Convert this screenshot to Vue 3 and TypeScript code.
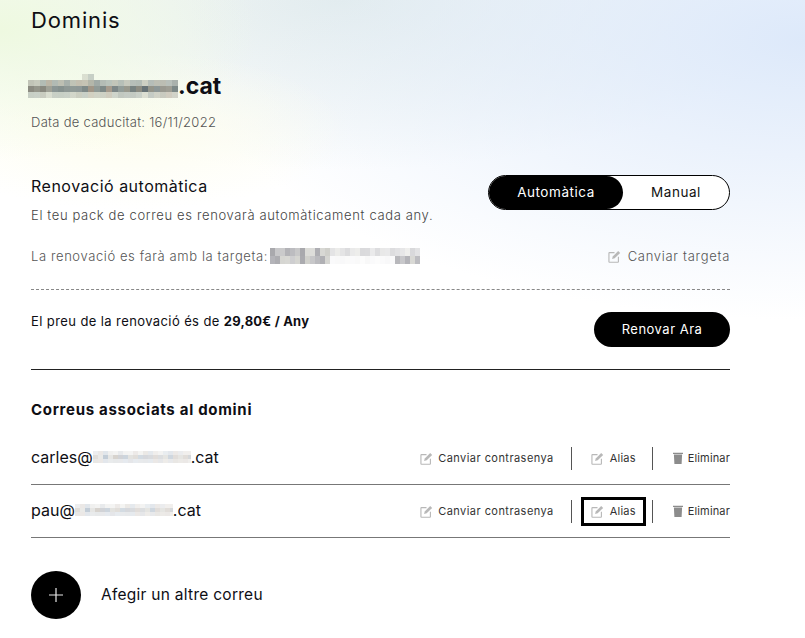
<template>
  <div class="page">
    <div class="page__bg"></div>
    <main class="content">
      <h1 class="title">Dominis</h1>

      <div class="domain">
        <span class="mosaic mosaic--domain">
          <i v-for="(c, i) in domainBlur" :key="i" :style="{ background: c }"></i>
        </span>
        <span>.cat</span>
      </div>
      <p class="expiry">Data de caducitat: 16/11/2022</p>

      <section class="renewal">
        <div class="renewal__text">
          <h2 class="renewal__title">Renovació automàtica</h2>
          <p class="renewal__desc">El teu pack de correu es renovarà automàticament cada any.</p>
        </div>
        <div class="switch">
          <button class="switch__opt switch__opt--active">Automàtica</button>
          <button class="switch__opt">Manual</button>
        </div>
      </section>

      <div class="card-row">
        <span class="card-row__label">La renovació es farà amb la targeta:</span>
        <span class="mosaic mosaic--card">
          <i v-for="(c, i) in cardBlur" :key="i" :style="{ background: c }"></i>
        </span>
        <a class="action action--big">
          <svg class="edit-icon" viewBox="0 0 14 14">
            <path d="M11.2 7.4V12.6a.6.6 0 0 1-.6.6H1.6a.6.6 0 0 1-.6-.6V3.4a.6.6 0 0 1 .6-.6H7" fill="none" stroke="#b8b8b8" stroke-width="1.2" />
            <path d="M4.4 9.8l.7-2.8L11 1l2.1 2.1-5.9 5.9z" fill="#b8b8b8" />
          </svg>
          Canviar targeta
        </a>
      </div>

      <div class="price-row">
        <p class="price-row__text">El preu de la renovació és de <b>29,80€ / Any</b></p>
        <button class="renew-btn">Renovar Ara</button>
      </div>

      <section class="mails">
        <h3 class="mails__title">Correus associats al domini</h3>
        <div v-for="m in mails" :key="m.user" class="mail">
          <div class="mail__addr">
            <span>{{ m.user }}@</span>
            <span class="mosaic mosaic--mail">
              <i v-for="(c, i) in mailBlur" :key="i" :style="{ background: c }"></i>
            </span>
            <span>.cat</span>
          </div>
          <div class="mail__actions">
            <a class="action action--pass">
              <svg class="edit-icon" viewBox="0 0 14 14">
                <path d="M11.2 7.4V12.6a.6.6 0 0 1-.6.6H1.6a.6.6 0 0 1-.6-.6V3.4a.6.6 0 0 1 .6-.6H7" fill="none" stroke="#b8b8b8" stroke-width="1.2" />
                <path d="M4.4 9.8l.7-2.8L11 1l2.1 2.1-5.9 5.9z" fill="#b8b8b8" />
              </svg>
              Canviar contrasenya
            </a>
            <span class="sep"></span>
            <a class="action action--alias" :class="{ 'action--focus': m.focus }">
              <svg class="edit-icon" viewBox="0 0 14 14">
                <path d="M11.2 7.4V12.6a.6.6 0 0 1-.6.6H1.6a.6.6 0 0 1-.6-.6V3.4a.6.6 0 0 1 .6-.6H7" fill="none" stroke="#b8b8b8" stroke-width="1.2" />
                <path d="M4.4 9.8l.7-2.8L11 1l2.1 2.1-5.9 5.9z" fill="#b8b8b8" />
              </svg>
              Alias
            </a>
            <span class="sep"></span>
            <a class="action action--del">
              <svg class="trash-icon" viewBox="0 0 10 12">
                <path d="M0 .8h10v1.2H0zM.9 2.6h8.2l-.5 9.4H1.4z" fill="#8c8c8c" />
              </svg>
              Eliminar
            </a>
          </div>
        </div>
      </section>

      <div class="add">
        <button class="add__btn" aria-label="Afegir">
          <svg viewBox="0 0 14 14" width="14" height="14">
            <path d="M7 0v14M0 7h14" stroke="#e8e8e8" stroke-width="1.2" />
          </svg>
        </button>
        <span class="add__label">Afegir un altre correu</span>
      </div>
    </main>
  </div>
</template>

<script setup lang="ts">
const mails = [
  { user: "carles", focus: false },
  { user: "pau", focus: true },
];

const noise = (n: number) => {
  const v = Math.sin(n * 12.9898) * 43758.5453;
  return v - Math.floor(v);
};

// shape gives the opacity of a pixel, then it picks a colour from the palette
const blur = (
  palette: string[],
  rows: number,
  cols: number,
  seed: number,
  shape: (r: number, c: number) => number,
) => {
  const out: string[] = [];
  for (let r = 0; r < rows; r++) {
    for (let c = 0; c < cols; c++) {
      const tone = palette[Math.floor(noise(seed + r * 31 + c) * palette.length)];
      const o = shape(r, c) * (0.7 + 0.3 * noise(seed + r * 17 + c * 3));
      out.push(`rgba(${tone}, ${o.toFixed(2)})`);
    }
  }
  return out;
};

const domainRows = [0, 0.6, 1, 0.4];
const domainBlur = blur(
  ["110,122,122", "130,130,120", "100,112,116", "140,125,110", "150,150,140"],
  4,
  25,
  5,
  (r, c) => (r === 0 && (c === 9 || c === 10) ? 0.35 : domainRows[r]),
);

const cardBlur = blur(
  ["170,170,175", "190,190,192", "150,150,155", "205,205,200"],
  2,
  30,
  3,
  (r, c) => {
    if (c < 12) return 0.95;
    if (r === 0) return 0.45;
    return c > 24 ? 0.9 : 0.08;
  },
);

const mailRows = [0.5, 1, 0.55];
const mailBlur = blur(
  ["205,208,212", "215,210,205", "195,205,215", "225,225,222"],
  3,
  20,
  7,
  (r) => mailRows[r],
);
</script>

<style scoped>
.page {
  position: relative;
  width: 805px;
  height: 638px;
  overflow: hidden;
  background: #fff;
  color: #0e0e14;
  font-family: Inter, "Liberation Sans", sans-serif;
}

.page__bg {
  position: absolute;
  left: 0;
  top: 0;
  width: 805px;
  height: 320px;
  background:
    radial-gradient(ellipse 260px 130px at 0 30px, #eef9e0 0%, rgba(238, 249, 224, 0) 100%),
    radial-gradient(ellipse 220px 80px at 130px 130px, rgba(253, 253, 236, 0.9) 0%, rgba(253, 253, 236, 0) 100%),
    radial-gradient(ellipse 620px 280px at 805px 40px, #dde9fa 0%, rgba(221, 233, 250, 0) 100%),
    radial-gradient(ellipse 460px 170px at 340px 0, #e4edec 0%, rgba(228, 237, 236, 0) 100%),
    #fff;
}

.content {
  position: relative;
  width: 699px;
  margin-left: 31px;
}

.title {
  margin: 0;
  padding-top: 5px;
  font-size: 22px;
  line-height: 30px;
  font-weight: 400;
  letter-spacing: 0.85px;
}

.domain {
  display: flex;
  align-items: center;
  margin-top: 35px;
  margin-left: -3px;
  height: 32px;
  font-size: 23px;
  font-weight: 700;
}

.mosaic {
  display: inline-grid;
  flex-shrink: 0;
}

.mosaic i {
  display: block;
}

.mosaic--domain {
  grid-template-columns: repeat(25, 6px);
  grid-auto-rows: 6px;
  width: 150px;
  height: 24px;
}

.mosaic--card {
  grid-template-columns: repeat(30, 5px);
  grid-auto-rows: 8px;
  margin-left: 2px;
  width: 150px;
  height: 16px;
}

.mosaic--mail {
  grid-template-columns: repeat(20, 5px);
  grid-auto-rows: 4px;
  width: 98px;
  height: 12px;
  overflow: hidden;
}

.expiry {
  margin: 10px 0 0;
  font-size: 13px;
  line-height: 20px;
  font-weight: 300;
  letter-spacing: 0.28px;
  color: #555;
}

.renewal {
  display: flex;
  justify-content: space-between;
  margin-top: 43px;
}

.renewal__title {
  margin: 0;
  font-size: 16px;
  line-height: 22px;
  font-weight: 400;
  letter-spacing: 0.5px;
}

.renewal__desc {
  margin: 9px 0 0;
  font-size: 13px;
  line-height: 18px;
  font-weight: 300;
  letter-spacing: 0.64px;
  color: #444;
}

.switch {
  display: flex;
  width: 242px;
  height: 35px;
  border: 1px solid #000;
  border-radius: 18px;
  background: #fff;
  box-sizing: border-box;
}

.switch__opt {
  flex: 1;
  border: 0;
  background: none;
  padding: 0 0 2px;
  font: inherit;
  font-size: 13.5px;
  letter-spacing: 0.55px;
  color: #111;
  border-radius: 17px;
}

.switch__opt--active {
  flex: 0 0 134px;
  background: #000;
  color: #fff;
}

.card-row {
  display: flex;
  align-items: center;
  margin-top: 21px;
  height: 22px;
  font-size: 13px;
  font-weight: 300;
  letter-spacing: 0.6px;
  color: #555;
}

.action {
  display: inline-flex;
  align-items: center;
  gap: 5px;
  font-size: 11px;
  letter-spacing: 0.4px;
  color: #333;
  font-weight: 400;
}

.action--big {
  margin-left: auto;
  gap: 7px;
  font-size: 13px;
  font-weight: 300;
  letter-spacing: 0.7px;
  color: #555;
}

.edit-icon {
  width: 13px;
  height: 13px;
}

.trash-icon {
  width: 10px;
  height: 12px;
}

.price-row {
  display: flex;
  justify-content: space-between;
  align-items: flex-start;
  margin-top: 22px;
  padding-top: 22px;
  padding-bottom: 22px;
  border-top: 1px dashed #888;
  border-bottom: 1px solid #222;
}

.price-row__text {
  margin: 0;
  font-size: 13px;
  line-height: 18px;
  letter-spacing: 0.4px;
}

.price-row__text b {
  font-weight: 700;
  letter-spacing: 0.2px;
}

.renew-btn {
  width: 136px;
  height: 35px;
  padding: 0 0 2px;
  border: 0;
  border-radius: 18px;
  background: #000;
  color: #fff;
  font: inherit;
  font-size: 13px;
  letter-spacing: 0.5px;
}

.mails__title {
  margin: 0;
  padding-top: 30px;
  font-size: 15px;
  line-height: 20px;
  font-weight: 700;
  letter-spacing: 0.7px;
}

.mail {
  display: flex;
  align-items: center;
  justify-content: space-between;
  height: 53px;
  border-bottom: 1px solid #777;
  box-sizing: border-box;
}

.mails__title + .mail {
  margin-top: 12px;
}

.mail__addr {
  display: flex;
  align-items: center;
  font-size: 16px;
  padding-bottom: 3px;
}

.mail__actions {
  display: flex;
  align-items: center;
}

.action--pass {
  margin-right: 17px;
  letter-spacing: 0.45px;
}

.action--alias {
  width: 65px;
  height: 29px;
  gap: 6px;
  justify-content: center;
  box-sizing: border-box;
  margin: 0 6px 0 9px;
  border: 3px solid transparent;
  letter-spacing: 0.2px;
}

.action--focus {
  border-color: #000;
}

.action--del {
  margin-left: 20px;
  gap: 5px;
  letter-spacing: 0.15px;
}

.sep {
  width: 1px;
  height: 23px;
  background: #555;
}

.add {
  display: flex;
  align-items: center;
  gap: 20px;
  margin-top: 33px;
}

.add__btn {
  display: flex;
  align-items: center;
  justify-content: center;
  width: 50px;
  height: 48px;
  padding: 0;
  border: 0;
  border-radius: 50%;
  background: #000;
}

.add__label {
  padding-bottom: 2px;
  font-size: 15.5px;
  letter-spacing: 0.27px;
}
</style>

<style>
html,
body {
  margin: 0;
  background: #fff;
}
</style>
